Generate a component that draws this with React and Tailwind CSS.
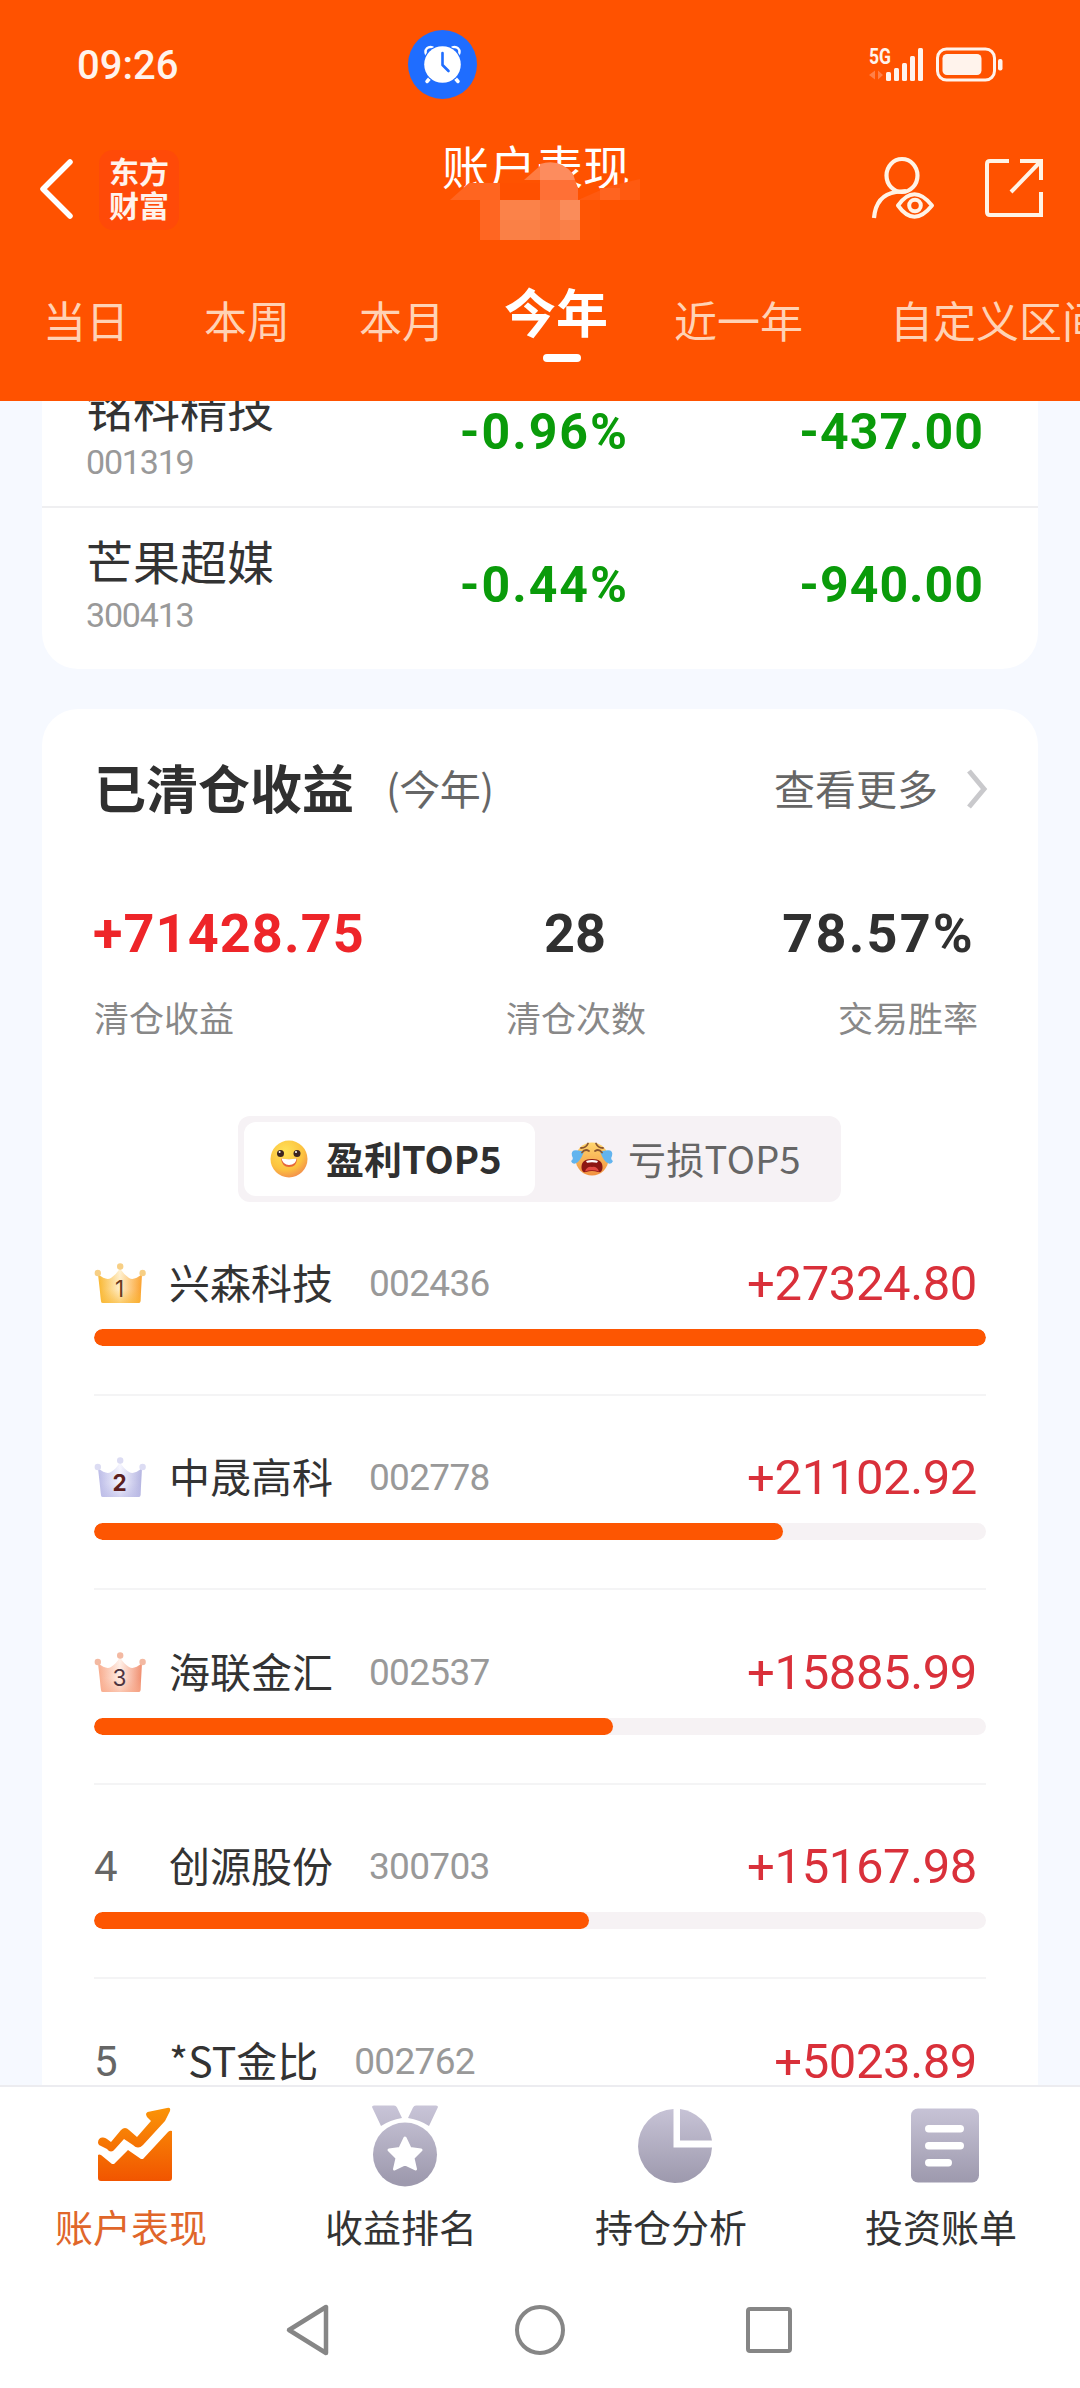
const CJK = "font-['Noto_Sans_CJK_SC',sans-serif]";
const NUM = "font-[Roboto,'Noto_Sans_CJK_SC',sans-serif]";

const tabs = [
  { label: "当日", gap: "ml-[43px]" },
  { label: "本周", gap: "ml-[75px]" },
  { label: "本月", gap: "ml-[69px]" },
  { label: "今年", gap: "ml-[59px]", active: true },
  { label: "近一年", gap: "ml-[66px]" },
  { label: "自定义区间", gap: "ml-[87px]" },
];

const holdings = [
  { name: "铭科精技", code: "001319", pct: "-0.96%", amount: "-437.00" },
  { name: "芒果超媒", code: "300413", pct: "-0.44%", amount: "-940.00" },
];

const ranking = [
  { rank: 1, name: "兴森科技", code: "002436", amount: "+27324.80", width: 892 },
  { rank: 2, name: "中晟高科", code: "002778", amount: "+21102.92", width: 689 },
  { rank: 3, name: "海联金汇", code: "002537", amount: "+15885.99", width: 519 },
  { rank: 4, name: "创源股份", code: "300703", amount: "+15167.98", width: 495 },
  { rank: 5, name: "*ST金比", code: "002762", amount: "+5023.89", width: 164 },
];

const crownTones = {
  1: ["#f9b52c", "#fff0cf", "#fba02c", "#f7cf85", "#6b3a1c", 400],
  2: ["#b9b9e6", "#f6f6ff", "#b3b3e0", "#dcdcf3", "#5c1f1f", 700],
  3: ["#f8a98a", "#fff0e8", "#f08c6c", "#f3b9a2", "#4d3440", 400],
};

function Crown({ rank }) {
  const [a, b, c, knob, ink, weight] = crownTones[rank];
  const id = "crown" + rank;
  return (
    <svg width="54" height="42" viewBox="0 0 54 42">
      <defs>
        <linearGradient id={id} x1="0" x2="1" y1="0" y2="0">
          <stop offset="0" stopColor={a} />
          <stop offset="0.5" stopColor={b} />
          <stop offset="1" stopColor={c} />
        </linearGradient>
        <linearGradient id={id + "f"} x1="0" x2="0" y1="0" y2="1">
          <stop offset="0" stopColor="#fff" stopOpacity="0.15" />
          <stop offset="0.6" stopColor={a} stopOpacity="0" />
          <stop offset="1" stopColor={a} stopOpacity="0.6" />
        </linearGradient>
      </defs>
      <path d="M4 12 Q12 19 17 16 Q23 12 26 6 Q29 12 35 16 Q40 19 48 12 L46.500 39 Q46.500 41 44.500 41 H9 Q7 41 7 39 Z" fill={"url(#" + id + ")"} />
      <path d="M4 12 Q12 19 17 16 Q23 12 26 6 Q29 12 35 16 Q40 19 48 12 L46.500 39 Q46.500 41 44.500 41 H9 Q7 41 7 39 Z" fill={"url(#" + id + "f)"} />
      <circle cx="3.800" cy="11" r="3.200" fill={knob} />
      <circle cx="26.200" cy="4.500" r="3.200" fill={knob} />
      <circle cx="48.600" cy="11" r="3.200" fill={knob} />
      <text x="25.500" y="35" textAnchor="middle" fontFamily="Inter" fontSize="22.500" fontWeight={weight} fill={ink}>
        {rank}
      </text>
    </svg>
  );
}

function HappyFace() {
  return (
    <svg width="38" height="38" viewBox="0 0 38 38">
      <defs>
        <radialGradient id="happy" cx="0.4" cy="0.3" r="0.75">
          <stop offset="0" stopColor="#ffe257" />
          <stop offset="0.65" stopColor="#fcc23f" />
          <stop offset="1" stopColor="#f28b4e" />
        </radialGradient>
      </defs>
      <circle cx="19" cy="19" r="18.500" fill="url(#happy)" />
      <circle cx="10.500" cy="13.500" r="3.500" fill="#3b2420" />
      <circle cx="27" cy="13.500" r="3.500" fill="#3b2420" />
      <circle cx="9.600" cy="12" r="1" fill="#fff" />
      <circle cx="26" cy="12" r="1" fill="#fff" />
      <path d="M11 18.500 Q19 20 27 18.500 Q27 27 19 27 Q12 27 11 18.500Z" fill="#e5663a" />
      <path d="M11.500 18.500 Q19 20 26.500 18.500 Q26 25 19 25 Q13 25 11.500 18.500Z" fill="#fff" />
    </svg>
  );
}

function CryingFace() {
  return (
    <svg width="44" height="36" viewBox="0 0 44 36">
      <defs>
        <linearGradient id="cry" x1="0" x2="0" y1="0" y2="1">
          <stop offset="0" stopColor="#ffd66e" />
          <stop offset="1" stopColor="#f1913f" />
        </linearGradient>
      </defs>
      <circle cx="22" cy="18" r="16.500" fill="url(#cry)" />
      <path d="M11 10 Q0 7 2 15 Q4 18 1 20 Q3 25 8 21 Q12 17 14 10Z" fill="#62b4ee" />
      <path d="M33 10 Q44 7 42 15 Q40 18 43 20 Q41 25 36 21 Q32 17 30 10Z" fill="#62b4ee" />
      <path d="M11 7 Q16 7 18 2.500 M33 7 Q28 7 26 2.500 M12 11.500 Q15 7.500 19 10 M32 11.500 Q29 7.500 25 10" stroke="#8a5530" strokeWidth="1.800" fill="none" strokeLinecap="round" />
      <path d="M11.500 27 Q11 18 22 18 Q33 18 32.500 27 Q32 32 28 31 Q22 29 16 31 Q12 32 11.500 27Z" fill="#8d1713" />
      <path d="M16 20 Q22 17.800 28 20 L27 21.800 Q22 20.500 17 21.800Z" fill="#fff" />
      <path d="M15 30.500 Q17 25 22 26 Q27 25 29 30.500 Q22 28 15 30.500Z" fill="#e24a42" />
    </svg>
  );
}

function Mosaic() {
  return (
    <svg className="absolute left-[450px] top-[160px]" width="192" height="82" viewBox="450 160 192 82">
      <rect x="500" y="183" width="40" height="17" fill="#ff5000" />
      <path d="M450 200 L469 183 H500 V200Z" fill="#ff6520" />
      <path d="M524 180 L541 165 V180Z" fill="#ff7c42" />
      <path d="M540 180 V164 Q560 158 573 174 L575 180Z" fill="#fd8c5e" />
      <path d="M540 180 H575 L578 188 V200 H540Z" fill="#ff7036" />
      <path d="M578 200 L610 186 L640 179 V200Z" fill="#ff5a10" />
      <rect x="600" y="188" width="20" height="12" fill="#ff6420" />
      <rect x="480" y="200" width="20" height="40" fill="#ff6622" />
      <rect x="500" y="200" width="40" height="20" fill="#fb8249" />
      <rect x="500" y="220" width="40" height="20" fill="#fa8046" />
      <rect x="540" y="200" width="20" height="40" fill="#fb7a3f" />
      <rect x="560" y="200" width="20" height="20" fill="#fa8c5a" />
      <rect x="560" y="220" width="20" height="20" fill="#fa8048" />
      <rect x="580" y="200" width="20" height="40" fill="#ff5504" />
    </svg>
  );
}

function StatusBar() {
  return (
    <div className="flex h-[130px] items-start text-white">
      <span className={`${NUM} ml-[77px] mt-[45px] w-[104px] text-[40px] font-medium leading-[42px] text-[#fff3ec]`}>09:26</span>
      <svg className="ml-[226px] mt-[29px]" width="71" height="71" viewBox="0 0 71 71">
        <circle cx="35.500" cy="35.500" r="34.500" fill="#1f6dff" />
        <circle cx="23.500" cy="23" r="5" fill="none" stroke="#fff" strokeWidth="2.500" />
        <circle cx="47.500" cy="23" r="5" fill="none" stroke="#fff" strokeWidth="2.500" />
        <path d="M23 49 L20 52.500 M48 49 L51 52.500" stroke="#fff" strokeWidth="3.500" strokeLinecap="round" />
        <circle cx="35.500" cy="35.500" r="19.500" fill="#1f6dff" />
        <circle cx="35.500" cy="35.500" r="18.300" fill="#fff" />
        <path d="M35.500 24 V36 L41.500 42" stroke="#1f6dff" strokeWidth="2.600" fill="none" strokeLinecap="round" strokeLinejoin="round" />
      </svg>
      <svg className="ml-[390px] mt-[38px]" width="58" height="46" viewBox="0 -8 58 46">
        <text x="1" y="18" fontFamily="Roboto" fontSize="22.500" fontWeight="700" fill="#fff3ec" textLength="22" lengthAdjust="spacingAndGlyphs">5G</text>
        <path d="M1 29 L7 24.500 V33.500Z M15 29 L10 24.500 V33.500Z" fill="#ff8048" />
        <rect x="18" y="26" width="5" height="9" rx="1.500" fill="#fff3ec" />
        <rect x="26" y="22" width="5" height="13" rx="1.500" fill="#fff3ec" />
        <rect x="34" y="17" width="5" height="18" rx="1.500" fill="#fff3ec" />
        <rect x="42" y="10" width="5" height="25" rx="1.500" fill="#fff3ec" />
        <rect x="50" y="2" width="5" height="33" rx="1.500" fill="#fff3ec" />
      </svg>
      <svg className="ml-[9px] mt-[46px]" width="70" height="38" viewBox="0 0 70 38">
        <rect x="2.500" y="3" width="57" height="31" rx="9" fill="none" stroke="#fff3ec" strokeWidth="3" />
        <rect x="7.500" y="8" width="39" height="21" rx="4.500" fill="#fff3ec" />
        <rect x="63" y="13" width="4.500" height="11.500" rx="2" fill="#fff3ec" />
      </svg>
    </div>
  );
}

function TitleBar() {
  return (
    <div className="flex h-[120px] items-start">
      <svg className="ml-[38px] mt-[28px]" width="36" height="62" viewBox="0 0 36 62">
        <path d="M32 4 L5 31 L32 58" fill="none" stroke="#fff" strokeWidth="5.500" strokeLinecap="round" strokeLinejoin="round" />
      </svg>
      <div className="ml-[25px] mt-[20px] flex h-[80px] w-[80px] flex-col items-center rounded-[14px] bg-[#ff4a08] pt-[3px]">
        <span className={`${CJK} w-[60px] text-[30px] font-bold leading-[34px] text-[#fff3ec]`}>东方财富</span>
      </div>
      <span className={`${CJK} ml-[263px] mt-[10px] w-[192px] whitespace-nowrap text-[47px] leading-[50px] text-white`}>账户表现</span>
      <svg className="ml-[236px] mt-[25px]" width="66" height="66" viewBox="0 0 66 66">
        <g fill="none" stroke="#fff3e6" strokeWidth="4.200">
          <ellipse cx="32" cy="20.500" rx="15.500" ry="16.500" />
          <path d="M4 63 Q6 40 26 37 L36 36" />
        </g>
        <path d="M28 50.500 Q44 28 62 50.500 Q44 73 28 50.500Z" fill="#ff5200" stroke="#fff3e6" strokeWidth="4" strokeLinejoin="round" />
        <circle cx="45" cy="50.500" r="5.800" fill="none" stroke="#fff3e6" strokeWidth="4" />
      </svg>
      <svg className="ml-[48px] mt-[27px]" width="62" height="64" viewBox="0 0 62 64">
        <path d="M25 4 H6 Q3 4 3 7 V55 Q3 58 6 58 H57 V35 M36 4 H57 V23 M56 5 L27 35" fill="none" stroke="#fff3e6" strokeWidth="4" />
      </svg>
    </div>
  );
}

function Header() {
  return (
    <header className="relative h-[401px] shrink-0 overflow-hidden bg-[#ff5200]">
      <StatusBar />
      <TitleBar />
      <nav className="flex h-[151px] w-[1200px] items-start">
        {tabs.map((t) =>
          t.active ? (
            <div key={t.label} className={`${t.gap} flex flex-col items-center pt-[33px]`}>
              <span className={`${CJK} text-[52px] font-bold leading-[56px] text-white`}>{t.label}</span>
              <span className="ml-[12px] mt-[15px] h-[8px] w-[38px] rounded-full bg-white" />
            </div>
          ) : (
            <span key={t.label} className={`${CJK} ${t.gap} whitespace-nowrap pt-[46px] text-[43px] leading-[46px] text-[#ffd2b5]`}>{t.label}</span>
          )
        )}
      </nav>
      <Mosaic />
    </header>
  );
}

function HoldingsCard() {
  return (
    <section className="mx-[42px] -mt-[46px] h-[314px] shrink-0 rounded-b-[36px] bg-white">
      {holdings.map((h, i) => (
        <div key={h.code} className={`flex h-[153px] pl-[44px] pr-[54px] ${i === 0 ? "border-b-2 border-[#efeff1]" : ""}`}>
          <div className="flex w-[300px] flex-col pt-[26px]">
            <span className={`${CJK} h-[52px] text-[47px] leading-[52px] text-[#333]`}>{h.name}</span>
            <span className={`${NUM} mt-[12px] text-[34px] leading-[35px] tracking-[-1.2px] text-[#999]`}>{h.code}</span>
          </div>
          <span className={`${NUM} w-[243px] text-right text-[50px] font-bold leading-[154px] tracking-[2px] text-[#0a9b0a]`}>{h.pct}</span>
          <span className={`${NUM} flex-1 text-right text-[50px] font-bold leading-[154px] tracking-[1px] text-[#0a9b0a]`}>{h.amount}</span>
        </div>
      ))}
    </section>
  );
}

function RankRow({ item }) {
  return (
    <div className="h-[194.4px] shrink-0">
      <div className="flex h-[74px] items-center">
        <div className="flex w-[75px] items-center">
          {item.rank <= 3 ? (
            <Crown rank={item.rank} />
          ) : (
            <span className={`${NUM} mt-[2px] text-[42px] leading-[72px] text-[#666]`}>{item.rank}</span>
          )}
        </div>
        <span className={`${CJK} -mt-[4px] whitespace-nowrap text-[41px] leading-[70px] text-[#333]`}>{item.name}</span>
        <span className={`${NUM} ml-[36px] mt-[2px] text-[37px] leading-[72px] tracking-[-0.7px] text-[#999]`}>{item.code}</span>
        <span className={`${NUM} ml-auto mr-[9px] mt-[2px] text-[49px] leading-[72px] tracking-[-0.4px] text-[#d9303a]`}>{item.amount}</span>
      </div>
      <div className="mt-[9px] h-[17px] overflow-hidden rounded-full bg-[#f6f2f4]">
        <div className="h-full rounded-full bg-[#fd5602]" style={{ width: item.width }} />
      </div>
      <div className="mt-[48px] h-[2px] bg-[#f4f4f5]" />
    </div>
  );
}

function ClearedCard() {
  return (
    <section className="mx-[42px] mt-[40px] h-[1500px] shrink-0 rounded-t-[36px] bg-white px-[52px]">
      <div className={`${CJK} flex h-[156px] items-center`}>
        <h2 className="text-[52px] font-bold leading-[60px] text-[#303030]">已清仓收益</h2>
        <span className="ml-[32px] text-[41px] leading-[60px] tracking-[-0.5px] text-[#666]">(今年)</span>
        <span className="ml-auto text-[41px] leading-[60px] text-[#666]">查看更多</span>
        <svg className="-mr-[4px] ml-[28px] mt-[3px]" width="24" height="40" viewBox="0 0 24 40">
          <path d="M3 2 L18 20 L3 38" fill="none" stroke="#c9c9cc" strokeWidth="5" />
        </svg>
      </div>
      <div className="flex h-[251px] pt-[39px]">
        <div className="flex w-[285px] flex-col items-start">
          <span className={`${NUM} -ml-[1px] text-[54px] font-bold leading-[60px] tracking-[1.1px] text-[#ee2529]`}>+71428.75</span>
          <span className={`${CJK} mt-[29px] text-[35px] leading-[48px] text-[#888]`}>清仓收益</span>
        </div>
        <div className="ml-[77px] flex w-[240px] flex-col items-center">
          <span className={`${NUM} mr-[2px] text-[54px] font-bold leading-[60px] text-[#303030]`}>28</span>
          <span className={`${CJK} mt-[29px] text-[35px] leading-[48px] text-[#888]`}>清仓次数</span>
        </div>
        <div className="ml-auto mr-[8px] flex w-[240px] flex-col items-end">
          <span className={`${NUM} mr-[3px] text-[54px] font-bold leading-[60px] tracking-[2.2px] text-[#303030]`}>78.57%</span>
          <span className={`${CJK} mt-[29px] text-[35px] leading-[48px] text-[#888]`}>交易胜率</span>
        </div>
      </div>
      <div className={`${CJK} ml-[144px] flex h-[86px] w-[603px] items-center rounded-[12px] bg-[#f6f2f5] p-[6px]`}>
        <div className="flex h-[74px] w-[291px] items-center rounded-[12px] bg-white pl-[26px]">
          <HappyFace />
          <span className="-mt-[3px] ml-[18px] whitespace-nowrap text-[38px] font-bold leading-[60px] text-[#303030]">盈利TOP5</span>
        </div>
        <div className="flex h-[74px] items-center pl-[35px]">
          <CryingFace />
          <span className="-mt-[3px] ml-[14px] whitespace-nowrap text-[38px] leading-[60px] tracking-[0.3px] text-[#666]">亏损TOP5</span>
        </div>
      </div>
      <div className="mt-[44px] flex flex-col">
        {ranking.map((r) => (
          <RankRow key={r.code} item={r} />
        ))}
      </div>
    </section>
  );
}

function NavIcon({ kind }) {
  const fill = kind === "chart" ? "url(#navOrange)" : "url(#navGray)";
  return (
    <svg width="90" height="92" viewBox="0 0 90 92">
      <defs>
        <linearGradient id="navOrange" gradientUnits="userSpaceOnUse" x1="0" x2="0" y1="8" y2="84">
          <stop offset="0" stopColor="#fb9608" />
          <stop offset="1" stopColor="#f15500" />
        </linearGradient>
        <linearGradient id="navGray" gradientUnits="userSpaceOnUse" x1="0" x2="0" y1="8" y2="84">
          <stop offset="0" stopColor="#c9c5d8" />
          <stop offset="1" stopColor="#9e9aae" />
        </linearGradient>
      </defs>
      {kind === "chart" && (
        <g fill={fill}>
          <path d="M8 46 Q8 41 12 40.500 Q15 40 17 42 L21 45 L31 33 Q35 29 39 33 L47 40 L61 24 L57 20 Q54 15 60 14.500 L77 11 Q81 10 80 14 L75 24 L53 48 Q48 53 43 48 L34 42 L25 52 Q21 57 17 52 L9 48Z" />
          <path d="M8 58 Q9 57 11 58 L22 67 L24 67 L38 53 L51 62 L53 62 L78 35 Q80 33 82 34 V81 Q82 84 79 84 H11 Q8 84 8 81Z" />
        </g>
      )}
      {kind === "medal" && (
        <g fill={fill}>
          <path d="M12 10 Q12 8.500 14 8.500 H34 Q36 8.500 37 10.500 L42 21 Q30 23 21 29Z" />
          <path d="M78 10 Q78 8.500 76 8.500 H56 Q54 8.500 53 10.500 L48 21 Q60 23 69 29Z" />
          <circle cx="45" cy="57.500" r="32" />
          <path d="M45 41 L50 51.500 L61 53 L53 61 L55.500 72 L45 67 L34.500 72 L37 61 L29 53 L40 51.500Z" fill="#fff" stroke="#fff" strokeWidth="3" strokeLinejoin="round" />
        </g>
      )}
      {kind === "pie" && (
        <g fill={fill}>
          <path d="M43.500 12 V50.500 H82 A37 37 0 1 1 43.500 12Z" />
          <path d="M50 12 A37 37 0 0 1 82 43.500 H50Z" />
        </g>
      )}
      {kind === "bill" && (
        <g>
          <rect x="11" y="11.500" width="68" height="74" rx="7" fill={fill} />
          <rect x="25" y="28" width="39" height="7.500" rx="3.700" fill="#fff" />
          <rect x="25" y="45" width="39" height="7.500" rx="3.700" fill="#fff" />
          <rect x="25" y="62" width="27" height="7.500" rx="3.700" fill="#fff" />
        </g>
      )}
    </svg>
  );
}

const navItems = [
  { kind: "chart", label: "账户表现", color: "text-[#e0662a]" },
  { kind: "medal", label: "收益排名", color: "text-[#333]" },
  { kind: "pie", label: "持仓分析", color: "text-[#333]" },
  { kind: "bill", label: "投资账单", color: "text-[#333]" },
];

export default function App() {
  return (
    <div className="flex h-[2388px] w-[1080px] flex-col overflow-hidden bg-[#f6f9ff]">
      <Header />
      <main className="flex h-[1684px] shrink-0 flex-col overflow-hidden">
        <HoldingsCard />
        <ClearedCard />
      </main>
      <footer className="h-[303px] shrink-0 border-t-2 border-[#ececf0] bg-white">
        <div className="grid grid-cols-4 pt-[10px]">
          {navItems.map((n) => (
            <div key={n.kind} className="flex flex-col items-center">
              <NavIcon kind={n.kind} />
              <span className={`${CJK} -ml-[8px] mt-[12px] text-[38px] leading-[50px] ${n.color}`}>{n.label}</span>
            </div>
          ))}
        </div>
        <div className="mt-[51px] flex items-center pl-[284px]">
          <svg width="48" height="56" viewBox="0 0 48 56">
            <path d="M42 5 V51 L5 28Z" fill="none" stroke="#868686" strokeWidth="4.500" strokeLinejoin="round" />
          </svg>
          <span className="ml-[183px] h-[50px] w-[50px] rounded-full border-[4.5px] border-[#868686]" />
          <span className="ml-[181px] h-[46px] w-[46px] rounded-[4px] border-[4.5px] border-[#868686]" />
        </div>
      </footer>
    </div>
  );
}
